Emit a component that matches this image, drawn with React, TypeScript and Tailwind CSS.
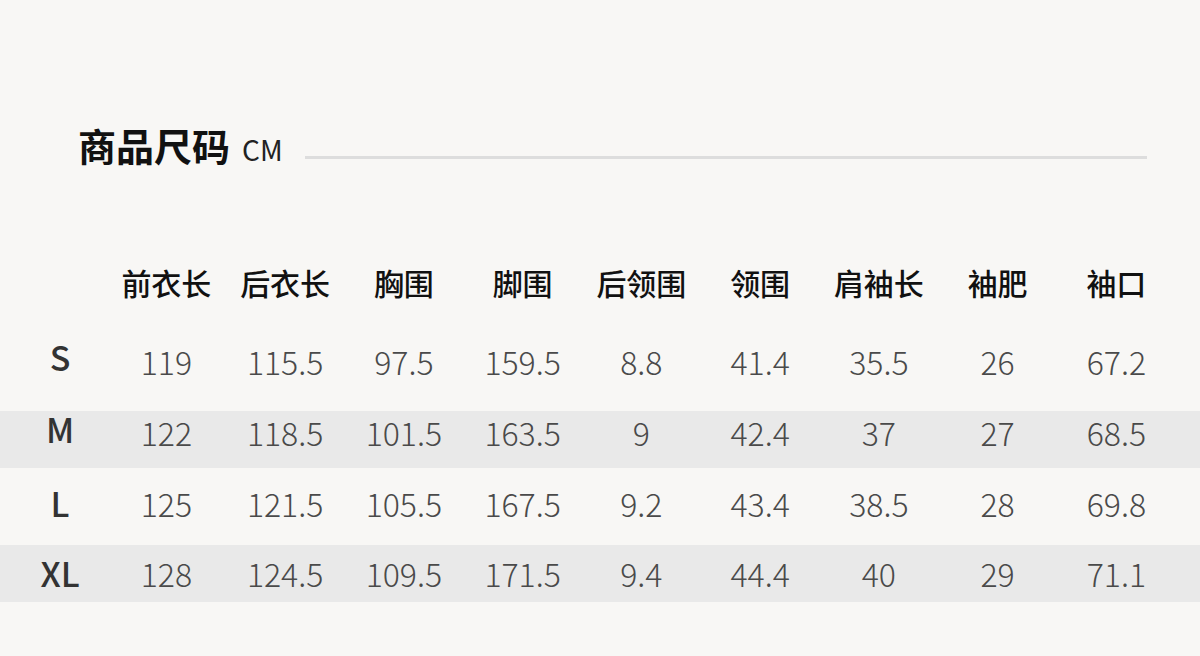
const headers = ['前衣长', '后衣长', '胸围', '脚围', '后领围', '领围', '肩袖长', '袖肥', '袖口'];

const rows = [
  { size: 'S', values: ['119', '115.5', '97.5', '159.5', '8.8', '41.4', '35.5', '26', '67.2'], cls: 'h-[91px] pb-[9px]', label: 'mb-[8px]' },
  { size: 'M', values: ['122', '118.5', '101.5', '163.5', '9', '42.4', '37', '27', '68.5'], cls: 'h-[57px] pb-[16px] bg-[#e9e9e9]', label: 'mb-[5px]' },
  { size: 'L', values: ['125', '121.5', '105.5', '167.5', '9.2', '43.4', '38.5', '28', '69.8'], cls: 'h-[77px] pb-[7px]', label: '' },
  { size: 'XL', values: ['128', '124.5', '109.5', '171.5', '9.4', '44.4', '40', '29', '71.1'], cls: 'h-[57px] pb-[1px] bg-[#e9e9e9]', label: '' },
];

const grid = 'grid grid-cols-[107px_repeat(9,118.75px)] items-center';

export default function App() {
  return (
    <div
      className="h-[656px] w-[1200px] overflow-hidden bg-[#f8f7f5]"
      style={{ fontFamily: '"Noto Sans CJK SC", "Noto Sans", sans-serif' }}
    >
      <div className="h-[250px] pt-[126px] pl-[78px] pr-[53px] flex items-start">
        <div className="flex items-baseline">
          <span className="text-[38px] leading-none font-bold text-[#111]">商品尺码</span>
          <span className="ml-[12px] text-[28px] leading-none text-[#222]">CM</span>
        </div>
        <div className="flex-1 ml-[22px] mt-[30px] h-[3px] bg-[#dddddd]" />
      </div>

      <div className={`${grid} h-[70px] pb-[6px]`}>
        <div />
        {headers.map((h) => (
          <div key={h} className="text-center text-[30px] leading-none font-medium text-[#111]">
            {h}
          </div>
        ))}
      </div>

      {rows.map((r) => (
        <div key={r.size} className={`${grid} ${r.cls}`}>
          <div className={`pl-[13px] text-center text-[34px] leading-none font-medium text-[#333] ${r.label}`}>
            {r.size}
          </div>
          {r.values.map((v, i) => (
            <div key={i} className="text-center text-[32px] leading-none font-light text-[#4a4a4a]">
              {v}
            </div>
          ))}
        </div>
      ))}
    </div>
  );
}
